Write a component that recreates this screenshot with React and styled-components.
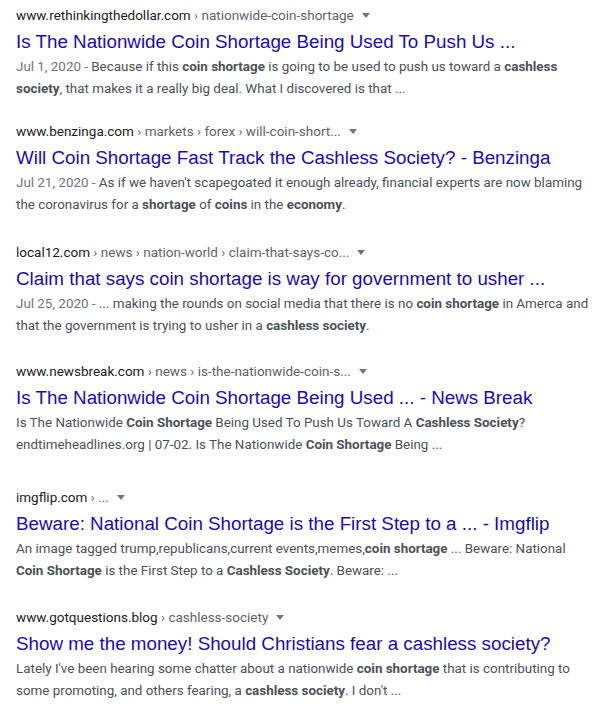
import React from 'react';
import styled, { createGlobalStyle } from 'styled-components';

const GlobalStyle = createGlobalStyle`
  body {
    margin: 0;
    background: #ffffff;
    font-family: Roboto, "Liberation Sans", Arial, sans-serif;
  }
`;

const Page = styled.div`
  display: flex;
  flex-direction: column;
  padding: 5px 0 0 16px;
  width: 600px;
  box-sizing: border-box;
`;

const Result = styled.div`
  display: flex;
  flex-direction: column;
  margin-bottom: ${(p) => p.gap}px;
`;

const UrlLine = styled.div`
  font-size: 13.5px;
  line-height: 20px;
  color: #202124;
  white-space: nowrap;
`;

const Crumbs = styled.span`
  color: #5f6368;
`;

const Caret = styled.span`
  display: inline-block;
  vertical-align: middle;
  width: 0;
  height: 0;
  margin-left: 8px;
  margin-bottom: 2px;
  border-left: 4px solid transparent;
  border-right: 4px solid transparent;
  border-top: 5px solid #70757a;
`;

const Title = styled.a`
  font-family: "Liberation Sans", Arial, sans-serif;
  font-size: 18.8px;
  line-height: 24px;
  color: #1a0dab;
  text-decoration: none;
  margin-top: 5px;
  white-space: nowrap;
`;

const Snippet = styled.div`
  font-size: 13.4px;
  line-height: 21.5px;
  color: #4d5156;
  margin-top: 2px;
  padding-right: 8px;
`;

const Date = styled.span`
  color: #70757a;
`;

const results = [
  {
    host: 'www.rethinkingthedollar.com',
    path: ' › nationwide-coin-shortage',
    title: 'Is The Nationwide Coin Shortage Being Used To Push Us ...',
    date: 'Jul 1, 2020',
    gap: 22,
    snippet: (
      <>
        Because if this <b>coin shortage</b> is going to be used to push us toward a <b>cashless</b>{' '}
        <b>society</b>, that makes it a really big deal. What I discovered is that ...
      </>
    ),
  },
  {
    host: 'www.benzinga.com',
    path: ' › markets › forex › will-coin-short...',
    title: 'Will Coin Shortage Fast Track the Cashless Society? - Benzinga',
    date: 'Jul 21, 2020',
    gap: 27,
    snippet: (
      <>
        As if we haven't scapegoated it enough already, financial experts are now blaming the
        coronavirus for a <b>shortage</b> of <b>coins</b> in the <b>economy</b>.
      </>
    ),
  },
  {
    host: 'local12.com',
    path: ' › news › nation-world › claim-that-says-co...',
    title: 'Claim that says coin shortage is way for government to usher ...',
    date: 'Jul 25, 2020',
    gap: 25,
    snippet: (
      <>
        ... making the rounds on social media that there is no <b>coin shortage</b> in Amerca and
        that the government is trying to usher in a <b>cashless society</b>.
      </>
    ),
  },
  {
    host: 'www.newsbreak.com',
    path: ' › news › is-the-nationwide-coin-s...',
    title: 'Is The Nationwide Coin Shortage Being Used ... - News Break',
    gap: 32,
    snippet: (
      <>
        Is The Nationwide <b>Coin Shortage</b> Being Used To Push Us Toward A <b>Cashless Society</b>?
        endtimeheadlines.org | 07-02. Is The Nationwide <b>Coin Shortage</b> Being ...
      </>
    ),
  },
  {
    host: 'imgflip.com',
    path: ' › ...',
    title: 'Beware: National Coin Shortage is the First Step to a ... - Imgflip',
    gap: 26,
    snippet: (
      <>
        An image tagged trump,republicans,current events,memes,<b>coin shortage</b> ... Beware: National{' '}
        <b>Coin Shortage</b> is the First Step to a <b>Cashless Society</b>. Beware: ...
      </>
    ),
  },
  {
    host: 'www.gotquestions.blog',
    path: ' › cashless-society',
    title: 'Show me the money! Should Christians fear a cashless society?',
    gap: 0,
    snippet: (
      <>
        Lately I've been hearing some chatter about a nationwide <b>coin shortage</b> that is
        contributing to some promoting, and others fearing, a <b>cashless society</b>. I don't ...
      </>
    ),
  },
];

const App = () => {
  return (
    <>
      <GlobalStyle />
      <Page>
        {results.map((r) => (
          <Result key={r.host} gap={r.gap}>
            <UrlLine>
              {r.host}
              <Crumbs>{r.path}</Crumbs>
              <Caret />
            </UrlLine>
            <Title href="#">{r.title}</Title>
            <Snippet>
              {r.date && <Date>{r.date} - </Date>}
              {r.snippet}
            </Snippet>
          </Result>
        ))}
      </Page>
    </>
  );
};

export default App;
